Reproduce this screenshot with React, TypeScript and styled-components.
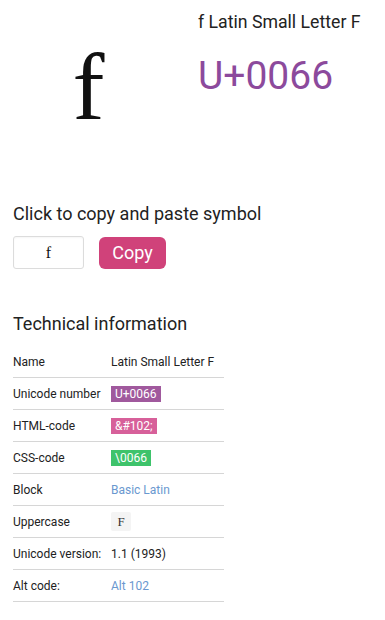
import React from "react";
import styled, { createGlobalStyle } from "styled-components";

const Global = createGlobalStyle`
  html, body { margin: 0; padding: 0; background: #fff; }
  body { font-family: Roboto, "Liberation Sans", Arial, sans-serif; color: #222; }
`;

const Page = styled.div`
  width: 385px;
  padding: 0 13px;
  box-sizing: border-box;
`;

const Header = styled.div`
  display: grid;
  grid-template-columns: 151px 1fr;
  column-gap: 34px;
  height: 202px;
`;

const BigGlyph = styled.div`
  font-family: "Liberation Serif", "Times New Roman", serif;
  font-size: 96px;
  line-height: 1;
  color: #111;
  text-align: center;
  padding-top: 39px;
`;

const Info = styled.div`
  display: flex;
  flex-direction: column;
  padding-top: 12px;
`;

const CharTitle = styled.div`
  font-size: 17.7px;
  line-height: 20px;
  color: #222;
`;

const CodePoint = styled.div`
  margin-top: 22px;
  font-size: 39px;
  line-height: 44px;
  color: #8c4a9c;
`;

const SectionTitle = styled.h2`
  margin: 0;
  font-size: 18px;
  font-weight: 400;
  line-height: 24px;
  color: #222;
`;

const CopyRow = styled.div`
  display: flex;
  align-items: center;
  gap: 15px;
  margin-top: 10px;
`;

const SymbolInput = styled.input`
  width: 71px;
  height: 33px;
  box-sizing: border-box;
  border: 1px solid #dcdcdc;
  border-radius: 3px;
  text-align: center;
  font-family: "Liberation Serif", serif;
  font-size: 16px;
  color: #111;
  background: #fff;
  outline: none;
  box-shadow: inset 0 1px 2px rgba(0,0,0,0.04);
`;

const CopyButton = styled.button`
  width: 67px;
  height: 32px;
  border: none;
  border-radius: 6px;
  background: #d0427a;
  color: #fff;
  font-family: Roboto, sans-serif;
  font-size: 18px;
  padding: 0;
`;

const TechSection = styled.div`
  margin-top: 43px;
`;

const Table = styled.div`
  width: 211px;
  margin-top: 10px;
`;

const Row = styled.div`
  display: grid;
  grid-template-columns: 98px 1fr;
  align-items: center;
  height: 32px;
  box-sizing: border-box;
  border-bottom: 1px solid #d6d6d6;
  font-size: 12px;
  color: #222;
`;

const Badge = styled.span<{ $bg: string }>`
  justify-self: start;
  background: ${(p) => p.$bg};
  color: #fff;
  padding: 0 4px;
  line-height: 16px;
  font-size: 12px;
`;

const Link = styled.a`
  color: #6a98cf;
  text-decoration: none;
`;

const UpperBox = styled.span`
  justify-self: start;
  width: 20px;
  height: 19px;
  display: inline-flex;
  align-items: center;
  justify-content: center;
  background: #f4f4f4;
  border-radius: 2px;
  font-family: "Liberation Serif", serif;
  font-size: 13px;
  color: #333;
`;

export default function App() {
  return (
    <Page>
      <Global />
      <Header>
        <BigGlyph>f</BigGlyph>
        <Info>
          <CharTitle>f Latin Small Letter F</CharTitle>
          <CodePoint>U+0066</CodePoint>
        </Info>
      </Header>
      <SectionTitle>Click to copy and paste symbol</SectionTitle>
      <CopyRow>
        <SymbolInput readOnly value="f" />
        <CopyButton>Copy</CopyButton>
      </CopyRow>
      <TechSection>
        <SectionTitle>Technical information</SectionTitle>
        <Table>
          <Row>
            <span>Name</span>
            <span>Latin Small Letter F</span>
          </Row>
          <Row>
            <span>Unicode number</span>
            <Badge $bg="#a0599d">U+0066</Badge>
          </Row>
          <Row>
            <span>HTML-code</span>
            <Badge $bg="#d7609a">&amp;#102;</Badge>
          </Row>
          <Row>
            <span>CSS-code</span>
            <Badge $bg="#3ec36b">\0066</Badge>
          </Row>
          <Row>
            <span>Block</span>
            <Link href="#">Basic Latin</Link>
          </Row>
          <Row>
            <span>Uppercase</span>
            <UpperBox>F</UpperBox>
          </Row>
          <Row>
            <span>Unicode version:</span>
            <span>1.1 (1993)</span>
          </Row>
          <Row>
            <span>Alt code:</span>
            <Link href="#">Alt 102</Link>
          </Row>
        </Table>
      </TechSection>
    </Page>
  );
}
